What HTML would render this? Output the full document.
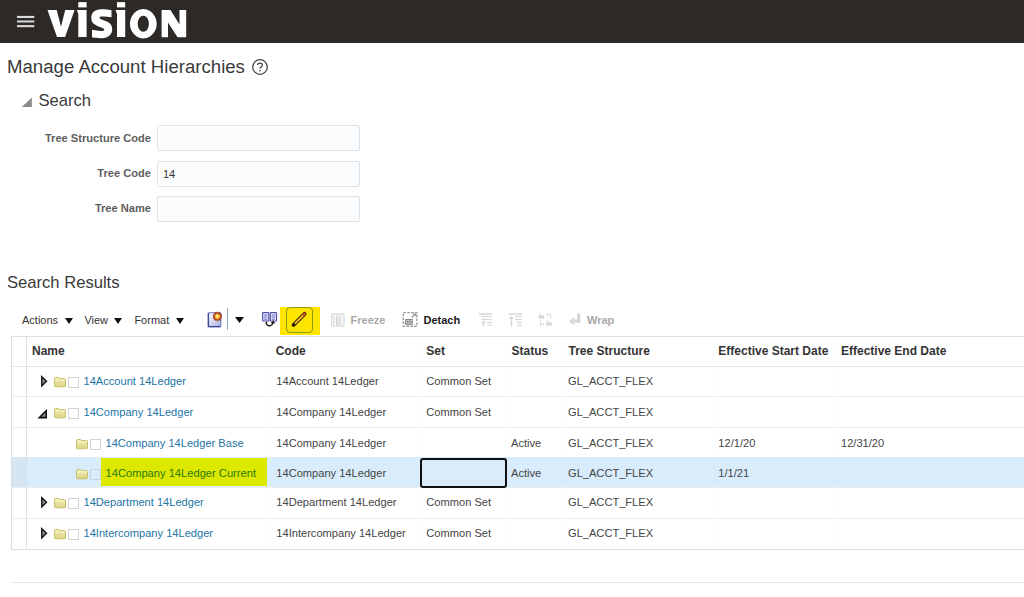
<!DOCTYPE html>
<html><head><meta charset="utf-8">
<style>
*{margin:0;padding:0;box-sizing:border-box}
html,body{width:1024px;height:597px;overflow:hidden;background:#fff;font-family:"Liberation Sans",sans-serif;color:#333}
.a{position:absolute;white-space:nowrap;line-height:1}
#hdr{position:absolute;left:0;top:0;width:1024px;height:43px;background:#2d2926}
.lbl{font-size:11.1px;font-weight:bold;color:#5e5e5e;text-align:right}
.inp{position:absolute;left:157px;width:203px;height:26px;border:1px solid #dde2e7;background:#fbfcfd;border-radius:2px}
.tb{font-size:11px;color:#333}
.tbb{font-size:11px;font-weight:bold}
.th{font-size:12px;font-weight:bold;color:#333}
.td{font-size:11.1px;color:#444}
.lk{font-size:11.1px;color:#2375a6}
.hl{position:absolute;background:#dee1e6}
.vl{position:absolute;background:#dee1e6}
</style></head><body>
<div id="hdr"></div>
<!-- hamburger -->
<svg class="a" style="left:0;top:0" width="40" height="40"><g fill="#dcdcdc"><rect x="17" y="15.9" width="17.3" height="2.1"/><rect x="17" y="20.5" width="17.3" height="1.95"/><rect x="17" y="25.1" width="17.3" height="2.1"/></g></svg>
<!-- logo -->
<svg class="a" style="left:0;top:0" width="200" height="43" viewBox="0 0 200 43">
<g fill="#fff">
<path d="M47.5,9.9 L56.7,9.9 L61,26.7 L65.2,9.9 L74.6,9.9 L65.1,37 L57,37 Z"/>
<rect x="78.3" y="2.1" width="8.3" height="5.3"/>
<path d="M76.7,9.9 L86.6,9.9 L86.6,37 L78.3,37 L78.3,14 Z"/>
<rect x="117" y="2.1" width="8.2" height="5.3"/>
<path d="M115.5,9.9 L125.2,9.9 L125.2,37 L117,37 L117,14 Z"/>
<path d="M143.3,9.1 A13.4,14.65 0 1,0 143.31,9.1 Z M143.3,15.8 A5.6,7.95 0 1,1 143.29,15.8 Z" fill-rule="evenodd"/>
<path d="M161.6,9.9 L170.5,9.9 L179.5,24.5 L179.5,9.9 L186.2,9.9 L186.2,37.3 L177.5,37.3 L168,22.5 L168,37.3 L161.6,37.3 Z"/>
</g>
<path fill="#fff" d="M111.5,10.3 C108,9.5 104,9.2 101,9.3 C95,9.5 91.3,12.5 91.3,18 C91.3,22.5 94,24.5 98,26.2 L102.5,28 C104,28.6 104.3,29.2 104.3,29.8 C104.3,30.6 103,31 101,31 C98,31 95,30.5 92,29.8 L92,37.3 C95,38 99,38.3 102,38.2 C108.5,38 112.2,34.5 112.2,29.3 C112.2,24.8 109.5,22.5 105.5,21 L101,19.2 C99.8,18.7 99.5,18.2 99.5,17.6 C99.5,16.8 100.5,16.5 102.5,16.5 C105,16.5 108.5,16.9 111.5,17.3 Z"/>
</svg>

<div class="a" style="left:7px;top:58.2px;font-size:18.62px;color:#3a3a3a">Manage Account Hierarchies</div>
<svg class="a" style="left:251px;top:58px" width="18" height="18" viewBox="0 0 18 18">
<circle cx="9" cy="9" r="7.3" fill="none" stroke="#444" stroke-width="1.3"/>
<path d="M6.6,7 C6.6,4.6 11.4,4.6 11.4,7 C11.4,8.6 9,8.8 9,10.8" fill="none" stroke="#444" stroke-width="1.3"/>
<rect x="8.3" y="12" width="1.4" height="1.4" fill="#444"/>
</svg>

<svg class="a" style="left:21px;top:97px" width="12" height="11" viewBox="0 0 12 11"><path d="M0.7,10 L10.9,10 L10.9,0.5 Z" fill="#8a8d90"/></svg>
<div class="a" style="left:38.5px;top:93px;font-size:16.6px;color:#3a3a3a">Search</div>

<div class="a lbl" style="left:0;width:151px;top:132.7px">Tree Structure Code</div>
<div class="inp" style="top:125px"></div>
<div class="a lbl" style="left:0;width:151px;top:167.7px">Tree Code</div>
<div class="inp" style="top:160.5px"></div>
<div class="a" style="left:163px;top:169px;font-size:11px;color:#333">14</div>
<div class="a lbl" style="left:0;width:151px;top:203px">Tree Name</div>
<div class="inp" style="top:196px"></div>

<div class="a" style="left:7px;top:274.8px;font-size:16.6px;color:#3a3a3a">Search Results</div>

<!-- toolbar -->
<div class="a tb" style="left:22px;top:314.9px">Actions</div>
<svg class="a" style="left:65px;top:318px" width="8" height="6"><path d="M0,0 L8,0 L4,6 Z" fill="#111"/></svg>
<div class="a tb" style="left:84.4px;top:314.9px">View</div>
<svg class="a" style="left:114px;top:318px" width="8" height="6"><path d="M0,0 L8,0 L4,6 Z" fill="#111"/></svg>
<div class="a tb" style="left:134.4px;top:314.9px">Format</div>
<svg class="a" style="left:176px;top:318px" width="8" height="6"><path d="M0,0 L8,0 L4,6 Z" fill="#111"/></svg>


<!-- create icon -->
<svg class="a" style="left:206px;top:310px" width="18" height="18" viewBox="0 0 18 18">
<defs><linearGradient id="gd" x1="0" y1="0" x2="1" y2="1"><stop offset="0" stop-color="#ffffff"/><stop offset="1" stop-color="#a9b0e0"/></linearGradient></defs>
<rect x="2.4" y="2.8" width="12.4" height="13.8" rx="0.8" fill="url(#gd)" stroke="#6a74b8" stroke-width="1.1"/><path d="M2.4,3 V16.6 H14.6" fill="none" stroke="#3f4a98" stroke-width="1.4"/>
<path d="M11.40,2.00 L12.51,3.08 L14.05,2.86 L14.31,4.38 L15.68,5.11 L15.00,6.50 L15.68,7.89 L14.31,8.62 L14.05,10.14 L12.51,9.92 L11.40,11.00 L10.29,9.92 L8.75,10.14 L8.49,8.62 L7.12,7.89 L7.80,6.50 L7.12,5.11 L8.49,4.38 L8.75,2.86 L10.29,3.08 Z" fill="#d4561c" stroke="#7d1e08" stroke-width="0.7" stroke-linejoin="round"/><circle cx="11.4" cy="6.5" r="2.4" fill="#ffd23c"/><circle cx="10.9" cy="6.0" r="1.1" fill="#fff3a0"/>
</svg>
<div class="a" style="left:227px;top:308px;width:1px;height:21.5px;background:#97a9be"></div>
<svg class="a" style="left:235px;top:317px" width="9" height="6"><path d="M0,0 L9,0 L4.5,6 Z" fill="#111"/></svg>
<!-- refresh/compare icon -->
<svg class="a" style="left:261px;top:311px" width="17" height="17" viewBox="0 0 17 17">
<rect x="1.6" y="1.6" width="6.2" height="8.4" rx="0.6" fill="#e2e4f8" stroke="#5654a8" stroke-width="1.2"/>
<rect x="9.3" y="1.6" width="6.2" height="8.4" rx="0.6" fill="#e2e4f8" stroke="#5654a8" stroke-width="1.2"/>
<path d="M3.1,4.2 H6.3 M3.1,6.2 H6.3 M3.1,8.2 H6.3 M10.8,4.2 H14 M10.8,6.2 H14 M10.8,8.2 H14" stroke="#7472c2" stroke-width="1"/>
<path d="M5.5,10.6 C4.5,13.8 7,15.2 9.5,14.6 C11,14.2 11.8,13 12,11.5" fill="none" stroke="#1a1a1a" stroke-width="1.4"/>
<path d="M9.6,12.3 L12.2,9.6 L14.4,12.6 Z" fill="#1a1a1a"/>
</svg>
<!-- yellow highlight + edit button -->
<div class="a" style="left:280px;top:307px;width:40px;height:28px;background:#ffe400"></div>
<div class="a" style="left:286.3px;top:307px;width:26.7px;height:25.7px;border:1.8px solid #8d9812;border-radius:4px"></div>
<svg class="a" style="left:290px;top:310px" width="20" height="20" viewBox="0 0 20 20">
<path d="M3.6,14.9 L14.6,3.9" stroke="#3d2e00" stroke-width="3.9" stroke-linecap="round"/>
<path d="M3.8,14.7 L14.4,4.1" stroke="#f0a418" stroke-width="1.9" stroke-linecap="butt"/>
<path d="M4.8,13.9 L13.4,5.3" stroke="#ffe060" stroke-width="0.7"/>
<path d="M13.6,4.9 L14.8,3.7" stroke="#e0462a" stroke-width="2" stroke-linecap="round"/>
<path d="M3.2,15.3 L4.2,14.3" stroke="#111" stroke-width="2" stroke-linecap="round"/>
</svg>
<!-- freeze -->
<svg class="a" style="left:330px;top:312px" width="16" height="16" viewBox="0 0 16 16">
<rect x="1.6" y="1.8" width="12.5" height="12.3" rx="0.8" fill="#fafafa" stroke="#dcdcdc" stroke-width="1.2"/>
<path d="M2,2.2 H13.8" stroke="#e2e2e2" stroke-width="1.3"/>
<path d="M4.2,4.2 L3.4,5.6 L4.2,7 L3.4,8.4 L4.2,9.8 L3.4,11.2 L4.2,12.6" fill="none" stroke="#d0d0d0" stroke-width="0.9"/>
<rect x="6" y="3.6" width="1.7" height="9.8" fill="#d4d4d4"/>
<rect x="8.7" y="3.6" width="1.8" height="9.8" fill="#d8d8d8"/>
<path d="M12,3.6 V13.4" stroke="#e6e6e6" stroke-width="1"/>
</svg>
<div class="a tbb" style="left:350.6px;top:314.9px;color:#a8a8a8">Freeze</div>
<!-- detach -->
<svg class="a" style="left:402px;top:311px" width="16" height="16" viewBox="0 0 16 16">
<path d="M1.3,1.6 H14.9 V15.2 H1.3 Z" fill="none" stroke="#9a9a9a" stroke-width="1.4" stroke-dasharray="2.6,1.3"/>
<rect x="3.6" y="8.6" width="6.6" height="4.6" fill="#fff" stroke="#777" stroke-width="1"/>
<path d="M3.6,10.9 H10.2 M5.8,8.6 V13.2 M8,8.6 V13.2" stroke="#777" stroke-width="0.9"/>
<path d="M9.6,6.6 L13.3,2.9" stroke="#8a8a8a" stroke-width="1.1"/>
<path d="M10.6,2.5 H13.7 V5.6 Z" fill="#8a8a8a"/>
</svg>
<div class="a tbb" style="left:423.5px;top:314.9px;color:#1a1a1a">Detach</div>
<!-- disabled icons -->
<svg class="a" style="left:470px;top:308px" width="120" height="22" viewBox="470 308 120 22">
<g fill="#d5d7d9">
<rect x="479" y="313.2" width="12.8" height="1.6"/>
<rect x="481.5" y="315.9" width="10.3" height="1.2"/>
<rect x="481.5" y="318.9" width="10.3" height="1.2"/>
<rect x="487" y="321.8" width="4.8" height="1.2"/>
<rect x="487" y="324.5" width="4.8" height="1.2"/>
<rect x="482.8" y="322" width="1.4" height="4.5"/>
<path d="M480.8,323.3 L483.5,320.6 L486.2,323.3 Z"/>
<rect x="508.7" y="313.2" width="13.2" height="1.6"/>
<rect x="515" y="315.9" width="7" height="1.2"/>
<rect x="515" y="318.9" width="7" height="1.2"/>
<rect x="517" y="321.8" width="5" height="1.2"/>
<rect x="517" y="324.5" width="5" height="1.2"/>
<rect x="510.7" y="317.5" width="1.4" height="9"/>
<path d="M508.8,319 L511.4,316 L514,319 Z"/>
<rect x="538.6" y="315.3" width="5.4" height="3.4"/>
<rect x="539" y="313.2" width="2.5" height="0.8"/>
<rect x="546" y="322.2" width="5.8" height="3.4"/>
<rect x="546.5" y="320.2" width="2.5" height="0.8"/>
<path d="M546.3,314.6 L548.3,313 V316.2 Z"/>
<path d="M547.5,314.2 H550.8 V318.6 H549.9 V315 H547.5 Z"/>
<rect x="540.1" y="320.4" width="0.9" height="5.8"/>
<rect x="540.5" y="323.8" width="3.5" height="0.9"/>
<rect x="577" y="313.4" width="3.4" height="9.2"/>
<rect x="573.5" y="319.7" width="6.9" height="2.9"/>
<path d="M568.9,321.2 L574.3,317.2 V325.6 Z"/>
</g>
</svg>
<div class="a tbb" style="left:587px;top:314.9px;color:#a8a8a8">Wrap</div>

<!-- table -->
<div class="a" style="left:11px;top:336px;width:1013px;height:1px;background:#d9e1e8"></div>
<div class="a" style="left:11px;top:336px;width:1px;height:214px;background:#d6dfe7"></div>
<div class="a" style="left:26px;top:336px;width:1px;height:214px;background:#d9e1e8"></div>
<div class="a" style="left:11px;top:366px;width:1013px;height:1px;background:#dde4ea"></div>
<div class="a" style="left:11px;top:396px;width:1013px;height:1px;background:#eaedf0"></div>
<div class="a" style="left:11px;top:427px;width:1013px;height:1px;background:#eaedf0"></div>
<div class="a" style="left:11px;top:457px;width:1013px;height:1px;background:#eaedf0"></div>
<div class="a" style="left:11px;top:487px;width:1013px;height:1px;background:#eaedf0"></div>
<div class="a" style="left:11px;top:518px;width:1013px;height:1px;background:#eaedf0"></div>
<div class="a" style="left:11px;top:549px;width:1013px;height:1px;background:#d9e1e8"></div>
<div class="a" style="left:11px;top:582px;width:1013px;height:1px;background:#dfe5ea"></div>
<div class="a" style="left:270px;top:337px;width:1px;height:212px;background:#fbfcfd"></div>
<div class="a" style="left:420px;top:337px;width:1px;height:212px;background:#fbfcfd"></div>
<div class="a" style="left:505px;top:337px;width:1px;height:212px;background:#fbfcfd"></div>
<div class="a" style="left:562px;top:337px;width:1px;height:212px;background:#fbfcfd"></div>
<div class="a" style="left:712px;top:337px;width:1px;height:212px;background:#fbfcfd"></div>
<div class="a" style="left:836px;top:337px;width:1px;height:212px;background:#fbfcfd"></div>
<div class="a" style="left:27px;top:457px;width:997px;height:30px;background:#d8ecfc"></div>
<div class="a" style="left:12px;top:457px;width:14px;height:30px;background:#d6e5f2"></div>
<div class="a th" style="left:32px;top:345.3px">Name</div>
<div class="a th" style="left:275.7px;top:345.3px">Code</div>
<div class="a th" style="left:426.3px;top:345.3px">Set</div>
<div class="a th" style="left:511.6px;top:345.3px">Status</div>
<div class="a th" style="left:568.5px;top:345.3px">Tree Structure</div>
<div class="a th" style="left:718.3px;top:345.3px">Effective Start Date</div>
<div class="a th" style="left:841px;top:345.3px">Effective End Date</div>
<svg class="a" style="left:40px;top:374.5px" width="9" height="13" viewBox="0 0 9 13"><path d="M1.8,1.7 L6.5,6.3 L1.8,10.9 Z" fill="#8f9296" stroke="#111" stroke-width="1.4" stroke-linejoin="miter"/></svg>
<svg class="a" style="left:54px;top:377px" width="12" height="11" viewBox="0 0 12 11"><defs><linearGradient id="fg" x1="0" y1="0" x2="0" y2="1"><stop offset="0" stop-color="#f3efb8"/><stop offset="1" stop-color="#dcd484"/></linearGradient></defs><path d="M0.5,1.4 Q0.5,0.5 1.4,0.5 L4.3,0.5 Q5,0.5 5.5,1.6 L10.6,1.6 Q11.5,1.6 11.5,2.5 L11.5,9 Q11.5,9.8 10.6,9.8 L1.4,9.8 Q0.5,9.8 0.5,9 Z" fill="url(#fg)" stroke="#c8bf6c" stroke-width="1"/><path d="M1,3 H11" stroke="#f8f5cc" stroke-width="0.9"/></svg>
<div class="a" style="left:68px;top:377px;width:11px;height:11px;border:1px solid #d2d2d2;background:transparent"></div>
<div class="a lk" style="left:83.5px;top:376px">14Account 14Ledger</div>
<div class="a td" style="left:276.3px;top:376px">14Account 14Ledger</div>
<div class="a td" style="left:426.3px;top:376px">Common Set</div>
<div class="a td" style="left:568px;top:376px">GL_ACCT_FLEX</div>
<svg class="a" style="left:37px;top:408.5px" width="12" height="10" viewBox="0 0 12 10"><path d="M2.3,8.6 L9.2,8.6 L9.2,1.8 Z" fill="#8f9296" stroke="#111" stroke-width="1.6" stroke-linejoin="miter"/></svg>
<svg class="a" style="left:54px;top:408px" width="12" height="11" viewBox="0 0 12 11"><defs><linearGradient id="fg" x1="0" y1="0" x2="0" y2="1"><stop offset="0" stop-color="#f3efb8"/><stop offset="1" stop-color="#dcd484"/></linearGradient></defs><path d="M0.5,1.4 Q0.5,0.5 1.4,0.5 L4.3,0.5 Q5,0.5 5.5,1.6 L10.6,1.6 Q11.5,1.6 11.5,2.5 L11.5,9 Q11.5,9.8 10.6,9.8 L1.4,9.8 Q0.5,9.8 0.5,9 Z" fill="url(#fg)" stroke="#c8bf6c" stroke-width="1"/><path d="M1,3 H11" stroke="#f8f5cc" stroke-width="0.9"/></svg>
<div class="a" style="left:68px;top:408px;width:11px;height:11px;border:1px solid #d2d2d2;background:transparent"></div>
<div class="a lk" style="left:83.5px;top:407px">14Company 14Ledger</div>
<div class="a td" style="left:276.3px;top:407px">14Company 14Ledger</div>
<div class="a td" style="left:426.3px;top:407px">Common Set</div>
<div class="a td" style="left:568px;top:407px">GL_ACCT_FLEX</div>
<svg class="a" style="left:76.3px;top:439px" width="12" height="11" viewBox="0 0 12 11"><defs><linearGradient id="fg" x1="0" y1="0" x2="0" y2="1"><stop offset="0" stop-color="#f3efb8"/><stop offset="1" stop-color="#dcd484"/></linearGradient></defs><path d="M0.5,1.4 Q0.5,0.5 1.4,0.5 L4.3,0.5 Q5,0.5 5.5,1.6 L10.6,1.6 Q11.5,1.6 11.5,2.5 L11.5,9 Q11.5,9.8 10.6,9.8 L1.4,9.8 Q0.5,9.8 0.5,9 Z" fill="url(#fg)" stroke="#c8bf6c" stroke-width="1"/><path d="M1,3 H11" stroke="#f8f5cc" stroke-width="0.9"/></svg>
<div class="a" style="left:90.3px;top:439px;width:11px;height:11px;border:1px solid #d2d2d2;background:transparent"></div>
<div class="a lk" style="left:105.5px;top:438px">14Company 14Ledger Base</div>
<div class="a td" style="left:276.3px;top:438px">14Company 14Ledger</div>
<div class="a td" style="left:511px;top:438px">Active</div>
<div class="a td" style="left:568px;top:438px">GL_ACCT_FLEX</div>
<div class="a td" style="left:718.3px;top:438px">12/1/20</div>
<div class="a td" style="left:841px;top:438px">12/31/20</div>
<svg class="a" style="left:76.3px;top:469px" width="12" height="11" viewBox="0 0 12 11"><defs><linearGradient id="fg" x1="0" y1="0" x2="0" y2="1"><stop offset="0" stop-color="#f3efb8"/><stop offset="1" stop-color="#dcd484"/></linearGradient></defs><path d="M0.5,1.4 Q0.5,0.5 1.4,0.5 L4.3,0.5 Q5,0.5 5.5,1.6 L10.6,1.6 Q11.5,1.6 11.5,2.5 L11.5,9 Q11.5,9.8 10.6,9.8 L1.4,9.8 Q0.5,9.8 0.5,9 Z" fill="url(#fg)" stroke="#c8bf6c" stroke-width="1"/><path d="M1,3 H11" stroke="#f8f5cc" stroke-width="0.9"/></svg>
<div class="a" style="left:90.3px;top:469px;width:11px;height:11px;border:1px solid #d2d2d2;background:transparent"></div>
<div class="a" style="left:100.8px;top:458.3px;width:166.6px;height:27.3px;background:#dde800"></div>
<div class="a" style="left:105.5px;top:468px;font-size:11.15px;color:#2a7a12">14Company 14Ledger Current</div>
<div class="a td" style="left:276.3px;top:468px">14Company 14Ledger</div>
<div class="a td" style="left:511px;top:468px">Active</div>
<div class="a td" style="left:568px;top:468px">GL_ACCT_FLEX</div>
<div class="a td" style="left:718.3px;top:468px">1/1/21</div>
<svg class="a" style="left:40px;top:495.5px" width="9" height="13" viewBox="0 0 9 13"><path d="M1.8,1.7 L6.5,6.3 L1.8,10.9 Z" fill="#8f9296" stroke="#111" stroke-width="1.4" stroke-linejoin="miter"/></svg>
<svg class="a" style="left:54px;top:498px" width="12" height="11" viewBox="0 0 12 11"><defs><linearGradient id="fg" x1="0" y1="0" x2="0" y2="1"><stop offset="0" stop-color="#f3efb8"/><stop offset="1" stop-color="#dcd484"/></linearGradient></defs><path d="M0.5,1.4 Q0.5,0.5 1.4,0.5 L4.3,0.5 Q5,0.5 5.5,1.6 L10.6,1.6 Q11.5,1.6 11.5,2.5 L11.5,9 Q11.5,9.8 10.6,9.8 L1.4,9.8 Q0.5,9.8 0.5,9 Z" fill="url(#fg)" stroke="#c8bf6c" stroke-width="1"/><path d="M1,3 H11" stroke="#f8f5cc" stroke-width="0.9"/></svg>
<div class="a" style="left:68px;top:498px;width:11px;height:11px;border:1px solid #d2d2d2;background:transparent"></div>
<div class="a lk" style="left:83.5px;top:497px">14Department 14Ledger</div>
<div class="a td" style="left:276.3px;top:497px">14Department 14Ledger</div>
<div class="a td" style="left:426.3px;top:497px">Common Set</div>
<div class="a td" style="left:568px;top:497px">GL_ACCT_FLEX</div>
<svg class="a" style="left:40px;top:526.5px" width="9" height="13" viewBox="0 0 9 13"><path d="M1.8,1.7 L6.5,6.3 L1.8,10.9 Z" fill="#8f9296" stroke="#111" stroke-width="1.4" stroke-linejoin="miter"/></svg>
<svg class="a" style="left:54px;top:529px" width="12" height="11" viewBox="0 0 12 11"><defs><linearGradient id="fg" x1="0" y1="0" x2="0" y2="1"><stop offset="0" stop-color="#f3efb8"/><stop offset="1" stop-color="#dcd484"/></linearGradient></defs><path d="M0.5,1.4 Q0.5,0.5 1.4,0.5 L4.3,0.5 Q5,0.5 5.5,1.6 L10.6,1.6 Q11.5,1.6 11.5,2.5 L11.5,9 Q11.5,9.8 10.6,9.8 L1.4,9.8 Q0.5,9.8 0.5,9 Z" fill="url(#fg)" stroke="#c8bf6c" stroke-width="1"/><path d="M1,3 H11" stroke="#f8f5cc" stroke-width="0.9"/></svg>
<div class="a" style="left:68px;top:529px;width:11px;height:11px;border:1px solid #d2d2d2;background:transparent"></div>
<div class="a lk" style="left:83.5px;top:528px">14Intercompany 14Ledger</div>
<div class="a td" style="left:276.3px;top:528px">14Intercompany 14Ledger</div>
<div class="a td" style="left:426.3px;top:528px">Common Set</div>
<div class="a td" style="left:568px;top:528px">GL_ACCT_FLEX</div>
<div class="a" style="left:420.3px;top:458.3px;width:86.8px;height:29.4px;border:2px solid #111;border-radius:3px;background:#d8ecfc"></div>
</body></html>
